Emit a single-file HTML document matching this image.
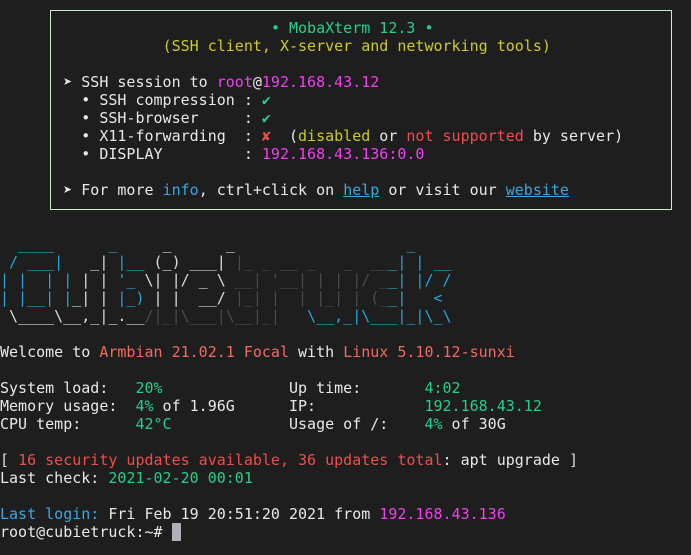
<!DOCTYPE html>
<html><head><meta charset="utf-8"><style>
html,body{margin:0;padding:0;background:#1e1e1e;width:691px;height:555px;overflow:hidden}
pre{margin:0;position:absolute;left:0;top:1px;font-family:"DejaVu Sans Mono","Liberation Mono",monospace;font-size:15px;line-height:18px;color:#e8e8e8;letter-spacing:0}
.box{position:absolute;left:50px;top:10px;width:622px;height:200px;border:1px solid #cfe8d0;box-sizing:border-box}
.g{color:#23d18b}.y{color:#cccc22}.m{color:#f040f0}.b{color:#3aa8e0}.r{color:#f14c4c}.s{color:#f06a60}
.u{color:#3aa8e0;text-decoration:underline}
.c{color:#23a7d9}.w{color:#dddddd}.d{color:#4a4a4a}
.cur{background:#b0b0b8;color:#b0b0b8}
</style></head><body>
<div class="box"></div>
<pre>

                              <span class="g">• MobaXterm 12.3 •</span>
                  <span class="y">(SSH client, X-server and networking tools)</span>

       ➤ SSH session to <span class="m">root</span>@<span class="m">192.168.43.12</span>
         • SSH compression : <span class="g">✔</span>
         • SSH-browser     : <span class="g">✔</span>
         • X11-forwarding  : <span class="r">✘</span>  (<span class="y">disabled</span> or <span class="r">not supported</span> by server)
         • DISPLAY         : <span class="m">192.168.43.136:0.0</span>

       ➤ For more <span class="b">info</span>, ctrl+click on <span class="u">help</span> or visit our <span class="u">website</span>


<span class="c">  ____  </span><span class="w">    </span><span class="c">_   </span><span class="w">  _      _</span><span class="d">                </span><span class="c">   _    </span>
<span class="c"> / ___| </span><span class="w">  _|</span><span class="c"> |__</span><span class="w"> (_) ___| </span><span class="d">|_ _ __ _   _  __</span><span class="c">_| | __</span>
<span class="c">| |  | |</span><span class="w"> | |</span><span class="c"> '_ </span><span class="w">\| |/ _ \ </span><span class="d">__| '__| | | |/ _</span><span class="c">_| |/ /</span>
<span class="c">| |__| |</span><span class="w">_| |</span><span class="c"> |_)</span><span class="w"> | |  __/ </span><span class="d">|_| |  | |_| | (_</span><span class="c">_|   &lt; </span>
<span class="w"> \____\_</span><span class="w">_,_|</span><span class="w">_.__</span><span class="d">/|_|\___|\__|_|  </span><span class="c"> \__,_|\___|_|\_\</span>

Welcome to <span class="s">Armbian 21.02.1 Focal</span> with <span class="s">Linux 5.10.12-sunxi</span>

System load:   <span class="g">20%</span>              Up time:       <span class="g">4:02</span>
Memory usage:  <span class="g">4%</span> of 1.96G      IP:            <span class="g">192.168.43.12</span>
CPU temp:      <span class="g">42°C</span>             Usage of /:    <span class="g">4%</span> of 30G

<span class="w">[</span> <span class="r">16 security updates available, 36 updates total</span>: apt upgrade <span class="w">]</span>
Last check: <span class="g">2021-02-20 00:01</span>

<span class="b">Last login:</span> Fri Feb 19 20:51:20 2021 from <span class="m">192.168.43.136</span>
root@cubietruck:~# <span class="cur">_</span>
</pre>
</body></html>
